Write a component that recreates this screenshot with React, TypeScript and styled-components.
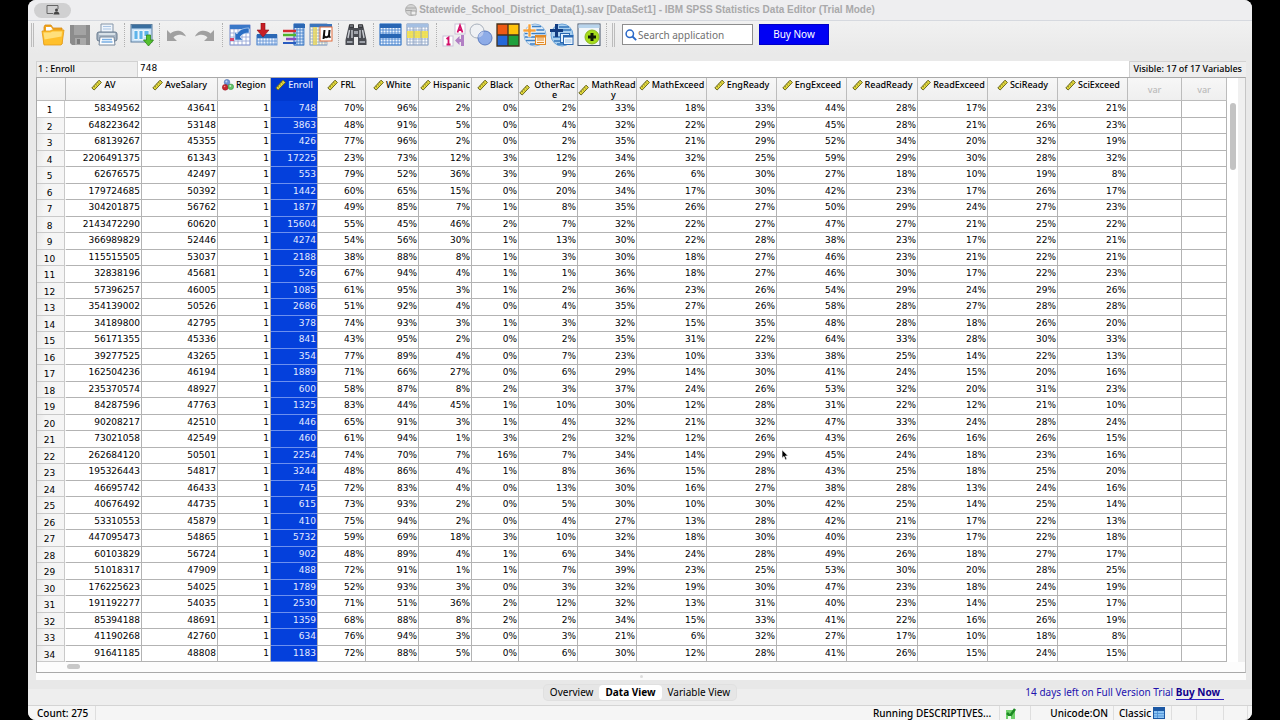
import React from "react";
import styled, { createGlobalStyle } from "styled-components";

const SANS = '"Noto Sans", "Liberation Sans", sans-serif';
const DIGITS = '"DejaVu Sans", "Noto Sans", sans-serif';

const GlobalStyle = createGlobalStyle`
  *, *::before, *::after { box-sizing: border-box; }
  body { margin: 0; background: #000; font-family: ${SANS}; color: #000; }
  button, input { font: inherit; color: inherit; }
`;

const Screen = styled.div`
  min-height: 100vh;
  padding: 0 28px;
  background: #000;
  display: flex;
`;

const AppWindow = styled.main`
  position: relative;
  flex: 1;
  min-width: 0;
  display: flex;
  flex-direction: column;
  background: #ececec;
  border-radius: 8px;
  overflow: hidden;
`;

const TitleBar = styled.header`
  height: 21px;
  display: grid;
  grid-template-columns: 1fr auto 1fr;
  align-items: center;
  padding: 0 6px;
  background: #eeeef0;
  border-bottom: 1px solid #d6d9df;
`;

const SharePill = styled.button`
  width: 37px;
  height: 15px;
  padding: 0;
  border: 0;
  border-radius: 8px;
  background: #d0d0d1;
  display: flex;
  align-items: center;
  justify-content: center;
`;

const Title = styled.h1`
  margin: 0;
  display: flex;
  align-items: center;
  gap: 2px;
  font: 700 10px/16px "Liberation Sans", Inter, sans-serif;
  color: #a9a9aa;
  white-space: nowrap;
`;

const Toolbar = styled.div`
  height: 33px;
  display: flex;
  align-items: flex-start;
  gap: 3px;
  padding: 2px 3px 0;
  background: linear-gradient(#f1f1f1, #e9e9e9);
`;

const Handle = styled.span`
  width: 3px;
  height: 24px;
  margin-right: 4px;
  border: solid #bcbcbc;
  border-width: 0 1px;
`;

const Separator = styled.span<{ $wide?: boolean }>`
  width: ${(p) => (p.$wide ? 6 : 5)}px;
  height: 24px;
  display: flex;
  justify-content: center;
  &::after { content: ""; border-left: 1px dotted #b0b0b0; }
`;

const ToolButton = styled.button`
  width: 24px;
  height: 24px;
  padding: 0;
  border: 0;
  background: transparent;
  svg { display: block; }
`;

const SearchBox = styled.label`
  width: 131px;
  height: 21px;
  margin-top: 1px;
  padding: 0 2px;
  display: flex;
  align-items: center;
  gap: 1px;
  background: #fff;
  border: 1px solid #8d8d8d;
`;

const SearchInput = styled.input`
  flex: 1;
  min-width: 0;
  padding: 0;
  border: 0;
  outline: 0;
  background: transparent;
  font-size: 10px;
  &::placeholder { color: #707070; opacity: 1; }
`;

const BuyButton = styled.button`
  width: 70px;
  height: 21px;
  margin: 1px 0 0 3px;
  padding: 0 0 2px;
  border: 1px solid #0000c4;
  background: #0000f4;
  color: #fff;
  font-size: 10px;
`;

const Body = styled.section`
  flex: 1;
  display: flex;
  flex-direction: column;
  padding: 7px 6px 0 8px;
  background: #e9e9e9;
`;

const CellBar = styled.div`
  height: 16px;
  display: flex;
  line-height: 14px;
  background: #fff;
`;

const CellName = styled.label`
  width: 102px;
  padding-left: 1px;
  background: #eee;
  border: solid #d2d2d2;
  border-width: 1px 1px 0 1px;
  font-size: 9px;
  font-weight: 500;
`;

const CellValue = styled.input`
  flex: 1;
  min-width: 0;
  height: 14px;
  padding: 0 2px;
  border: 0;
  outline: 0;
  background: #fff;
  font-family: ${DIGITS};
  font-size: 9px;
`;

const VisibleCount = styled.span`
  padding: 0 4px;
  background: #eee;
  border: solid #d2d2d2;
  border-width: 1px 0 0 1px;
  font-size: 9px;
  font-weight: 500;
  white-space: nowrap;
`;

const Frame = styled.div`
  border: 1px solid #a9a9a9;
  border-right-color: #c6c6c6;
  background: #fff;
`;

const GridArea = styled.div`
  display: flex;
`;

const TableClip = styled.div`
  flex: 1;
  min-width: 0;
  overflow: hidden;
`;

const DataTable = styled.table`
  width: 100%;
  min-width: 1190px;
  table-layout: fixed;
  border-collapse: separate;
  border-spacing: 0;
`;

const HeadCell = styled.th<{ $selected?: boolean; $empty?: boolean }>`
  height: 23px;
  padding: ${(p) => (p.$empty ? "7px 0 0" : "2px 0 0")};
  vertical-align: top;
  background: ${(p) => (p.$selected ? "#0038cf" : "linear-gradient(#f7f7f7, #efefef)")};
  color: ${(p) => (p.$selected ? "#e4eaff" : p.$empty ? "#bbb" : "#000")};
  border: solid ${(p) => (p.$selected ? "#0038cf" : "#bcbcbc")};
  border-width: 0 1px 1px 0;
  font-size: 9px;
  font-weight: 500;
  line-height: 10px;
`;

const HeadLabel = styled.span`
  display: flex;
  align-items: center;
  justify-content: center;
  gap: 2px;
  svg { flex: none; display: block; margin: -1px 0; }
`;

const HeadText = styled.span`
  min-width: 0;
  word-break: break-all;
`;

const Row = styled.tr`
  height: 16px;
  &:nth-child(odd) { height: 17px; }
`;

const RowHead = styled.th<{ $current?: boolean }>`
  padding: 2px 3px 0 0;
  background: ${(p) => (p.$current ? "#fff" : "linear-gradient(100deg, #e9e9e9, #f5f5f5 30%)")};
  box-shadow: inset -1px 0 #c9c9c9;
  border: solid #c9c9c9;
  border-width: 0 1px 1px 0;
  border-right-color: #fff;
  font: 400 9px/12px ${DIGITS};
  text-align: center;
`;

const Cell = styled.td<{ $selected?: boolean }>`
  padding: 0 1px 2px 0;
  background: ${(p) => (p.$selected ? "#0440dc" : "#fff")};
  color: ${(p) => (p.$selected ? "#e4eaff" : "#000")};
  border: solid #b3b3b3;
  border-width: 0 1px 1px 0;
  border-bottom-color: ${(p) => (p.$selected ? "#6c90ef" : "#b3b3b3")};
  font: 400 9px/12px ${DIGITS};
  text-align: right;
`;

const VerticalScroll = styled.div`
  width: 18px;
  padding: 25px 6px 0 3px;
  background: linear-gradient(90deg, #fff 0 11px, #f0f0f0 11px);
`;

const VerticalThumb = styled.div`
  width: 6px;
  height: 67px;
  border-radius: 3px;
  background: #c3c3c3;
`;

const HorizontalScroll = styled.div`
  height: 10px;
  padding: 2px 30px;
  background: #fcfcfc;
`;

const HorizontalThumb = styled.div`
  width: 13px;
  height: 5px;
  border-radius: 3px;
  background: #c8c8c8;
`;

const Splitter = styled.div`
  height: 7px;
  display: flex;
  align-items: center;
  justify-content: center;
  background: #fbfbfb;
  &::after { content: ""; width: 3px; height: 3px; border-radius: 50%; background: #dcdcdc; }
`;

const Footer = styled.div`
  height: 25px;
  display: grid;
  grid-template-columns: 1fr auto 1fr;
  align-items: center;
  padding: 0 28px;
  background: linear-gradient(#e8e8e8 0 9px, #eee 9px);
`;

const Tabs = styled.nav`
  grid-column: 2;
  display: flex;
  border-radius: 4px;
  background: #e6e6e6;
  box-shadow: 0 0 0 1px #e0e0e0;
`;

const Tab = styled.button<{ $active?: boolean }>`
  height: 15px;
  padding: 0 6px 1px;
  border: 0;
  border-radius: 4px;
  background: ${(p) => (p.$active ? "#fff" : "transparent")};
  font-size: 10px;
  line-height: 14px;
  font-weight: ${(p) => (p.$active ? 700 : 400)};
`;

const Trial = styled.p`
  margin: 0;
  justify-self: end;
  font-size: 10px;
  line-height: 14px;
  color: #2212ae;
  white-space: nowrap;
`;

const TrialLink = styled.a`
  display: inline-block;
  padding-right: 4px;
  color: #10008c;
  font-weight: 700;
  text-decoration: none;
  border-bottom: 1px solid #3020c0;
`;

const StatusBar = styled.footer`
  height: 15px;
  display: flex;
  padding: 0 4px;
  background: #f5f5f5;
  border-top: 1px solid #d4d4d4;
  font-size: 10px;
  font-weight: 500;
  line-height: 12px;
`;

const StatusItem = styled.span<{ $width: number; $end?: boolean }>`
  width: ${(p) => p.$width}px;
  padding: 0 5px 1px;
  display: flex;
  align-items: center;
  justify-content: ${(p) => (p.$end ? "flex-end" : "flex-start")};
  gap: 2px;
  border-right: 1px solid #dedede;
  white-space: nowrap;
`;

const StatusFill = styled.span`
  flex: 1;
`;

const Pointer = styled.svg`
  position: absolute;
  left: 753px;
  top: 449px;
`;

type Measure = "scale" | "nominal";
interface Column { name: string; width: number; percent: boolean; kind: Measure }

const col = (name: string, width: number, percent = true, kind: Measure = "scale"): Column => ({ name, width, percent, kind });

const columns: Column[] = [
  col("AV", 76, false),
  col("AveSalary", 76, false),
  col("Region", 53, false, "nominal"),
  col("Enroll", 47, false),
  col("FRL", 48),
  col("White", 53),
  col("Hispanic", 53),
  col("Black", 47),
  col("OtherRace", 59),
  col("MathReady", 59),
  col("MathExceed", 70),
  col("EngReady", 70),
  col("EngExceed", 70),
  col("ReadReady", 71),
  col("ReadExceed", 70),
  col("SciReady", 70),
  col("SciExceed", 70),
];

const data = `
58349562 43641 1 748 70 96 2 0 2 33 18 33 44 28 17 23 21
648223642 53148 1 3863 48 91 5 0 4 32 22 29 45 28 21 26 23
68139267 45355 1 426 77 96 2 0 2 35 21 29 52 34 20 32 19
2206491375 61343 1 17225 23 73 12 3 12 34 32 25 59 29 30 28 32
62676575 42497 1 553 79 52 36 3 9 26 6 30 27 18 10 19 8
179724685 50392 1 1442 60 65 15 0 20 34 17 30 42 23 17 26 17
304201875 56762 1 1877 49 85 7 1 8 35 26 27 50 29 24 27 23
2143472290 60620 1 15604 55 45 46 2 7 32 22 27 47 27 21 25 22
366989829 52446 1 4274 54 56 30 1 13 30 22 28 38 23 17 22 21
115515505 53037 1 2188 38 88 8 1 3 30 18 27 46 23 21 22 21
32838196 45681 1 526 67 94 4 1 1 36 18 27 46 30 17 22 23
57396257 46005 1 1085 61 95 3 1 2 36 23 26 54 29 24 29 26
354139002 50526 1 2686 51 92 4 0 4 35 27 26 58 28 27 28 28
34189800 42795 1 378 74 93 3 1 3 32 15 35 48 28 18 26 20
56171355 45336 1 841 43 95 2 0 2 35 31 22 64 33 28 30 33
39277525 43265 1 354 77 89 4 0 7 23 10 33 38 25 14 22 13
162504236 46194 1 1889 71 66 27 0 6 29 14 30 41 24 15 20 16
235370574 48927 1 600 58 87 8 2 3 37 24 26 53 32 20 31 23
84287596 47763 1 1325 83 44 45 1 10 30 12 28 31 22 12 21 10
90208217 42510 1 446 65 91 3 1 4 32 21 32 47 33 24 28 24
73021058 42549 1 460 61 94 1 3 2 32 12 26 43 26 16 26 15
262684120 50501 1 2254 74 70 7 16 7 34 14 29 45 24 18 23 16
195326443 54817 1 3244 48 86 4 1 8 36 15 28 43 25 18 25 20
46695742 46433 1 745 72 83 4 0 13 30 16 27 38 28 13 24 16
40676492 44735 1 615 73 93 2 0 5 30 10 30 42 25 14 25 14
53310553 45879 1 410 75 94 2 0 4 27 13 28 42 21 17 22 13
447095473 54865 1 5732 59 69 18 3 10 32 18 30 40 23 17 22 18
60103829 56724 1 902 48 89 4 1 6 34 24 28 49 26 18 27 17
51018317 47909 1 488 72 91 1 1 7 39 23 25 53 30 20 28 25
176225623 54025 1 1789 52 93 3 0 3 32 19 30 47 23 18 24 19
191192277 54035 1 2530 71 51 36 2 12 32 13 31 40 23 14 25 17
85394188 48691 1 1359 68 88 8 2 2 34 15 33 41 22 16 26 19
41190268 42760 1 634 76 94 3 0 3 21 6 32 27 17 10 18 8
91641185 48808 1 1183 72 88 5 0 6 30 12 28 41 26 15 24 15
`.trim().split("\n").map((line) => line.split(" "));

const Ruler = () => (
  <svg width="11" height="12" viewBox="0 0 11 12" aria-hidden="true">
    <path d="M.8 9 8 1.200 10.400 3.400 3.200 11z" fill="#e3d93c" stroke="#6b6820" strokeWidth="1" strokeLinejoin="round" />
    <path d="m2.800 7.200 1.100 1M4.600 5.200l1.100 1M6.400 3.200l1.100 1" stroke="#5c5a1a" strokeWidth=".9" />
  </svg>
);

const Nominal = () => (
  <svg width="12" height="12" viewBox="0 0 12 12" aria-hidden="true">
    <circle cx="5" cy="3.200" r="2.800" fill="#6d95d8" stroke="#4468a8" strokeWidth=".5" />
    <circle cx="3.200" cy="8.300" r="2.900" fill="#c6262f" stroke="#8e1a22" strokeWidth=".5" />
    <circle cx="8.800" cy="7.800" r="2.800" fill="#62c267" stroke="#2f8a3a" strokeWidth=".5" />
    <circle cx="4.400" cy="2.500" r="1" fill="#c4d8f8" />
    <circle cx="8.300" cy="7" r="1" fill="#c8f0c8" />
    <circle cx="2.600" cy="7.500" r=".8" fill="#ee9a9a" />
  </svg>
);

const lines = (x1: number, x2: number, y1: number, y2: number, step: number) => {
  let d = "";
  for (let x = x1; x <= x2; x += step) d += `M${x} ${y1}V${y2}`;
  for (let y = y1; y <= y2; y += step) d += `M${x1} ${y}H${x2}`;
  return d;
};

const Mesh = ({ x, y, w, h, step = 3, fill = "#fff", stroke = "#7fa6dc" }: { x: number; y: number; w: number; h: number; step?: number; fill?: string; stroke?: string }) => (
  <>
    <rect x={x} y={y} width={w} height={h} fill={fill} stroke={stroke} strokeWidth=".8" />
    <path d={lines(x, x + w, y, y + h, step)} stroke={stroke} strokeWidth=".8" fill="none" />
  </>
);

const icons: Record<string, React.ReactNode> = {
  open: (
    <>
      <path d="M3 21V4l1-2h6l2 3h9v16z" fill="#f0a51e" stroke="#d98a10" strokeWidth=".8" />
      <path d="M5 4h5l2 3h8v4H5z" fill="#fff" />
      <path d="M1 8h8l2-1h12l-2 14-1 1H3z" fill="#ffc02c" stroke="#e39a16" strokeWidth=".8" />
      <path d="M2.500 9.500h7l2-1h9.500l-.5 5-17 3z" fill="#ffe07c" />
    </>
  ),
  save: (
    <>
      <path d="M2 2h20v20H4l-2-2z" fill="#8c8c8c" />
      <rect x="6" y="2" width="12" height="10" fill="#a3a3a3" />
      <rect x="7" y="15" width="11" height="7" fill="#a9a9a9" />
      <rect x="9" y="16" width="3" height="5" fill="#7c7c7c" />
    </>
  ),
  print: (
    <>
      <path d="M6 1h12v9H6z" fill="#eef4fb" stroke="#8696a8" />
      <path d="M8 3.500h8M8 6h8" stroke="#a8c4e4" />
      <rect x="2" y="9" width="20" height="9" rx="2" fill="#a9b6c4" stroke="#66788c" />
      <path d="M4 11h16" stroke="#eaf0f5" strokeWidth="1.500" />
      <path d="M5 14h14l1 8H4z" fill="#fff" stroke="#76889c" />
      <path d="M7 16.500h10M6.500 19h11" stroke="#78aee4" strokeWidth="1.500" />
    </>
  ),
  recall: (
    <>
      <rect x="1" y="1.500" width="21" height="17.500" fill="#c9e2f7" stroke="#5d7f9f" />
      <rect x="1.500" y="2" width="20" height="3.500" fill="#3a6f9f" />
      <path d="M4 7.500h4v9H4zM9 7.500h4v9H9zM14 7.500h5v6h-5z" fill="#5eb4ea" stroke="#fff" strokeWidth=".8" />
      <path d="M16.500 12h4v5h3l-5 6-5-6h3z" fill="#55c12f" stroke="#2d8519" strokeWidth=".8" />
    </>
  ),
  undo: <path d="M2 7v11h10l-3.500-3.500c3-3.500 7.500-3.500 12.500-1C18 6.500 10 6.500 5.500 10.500z" fill="#a0a0a0" />,
  redo: <path d="M22 7v11H12l3.500-3.500c-3-3.500-7.500-3.500-12.500-1C6 6.500 14 6.500 18.500 10.500z" fill="#a0a0a0" />,
  gotoCase: (
    <>
      <Mesh x={2} y={2} w={20} h={20} step={4} stroke="#8e9ed2" />
      <path d="M2 2h20v4H2z" fill="#3a78c8" />
      <path d="M2 15h4v3H2z" fill="#d84a70" />
      <path d="M7 9v8h8l-3-3c2-3 5-4 9-4V5c-6 0-10 2-12 6z" fill="#2b6fc4" stroke="#cfe0f8" strokeWidth=".6" />
    </>
  ),
  gotoVariable: (
    <>
      <Mesh x={2} y={12} w={20} h={10} step={3} fill="#eef5ff" stroke="#5b8ed0" />
      <path d="M2 11h20v4H2z" fill="#2c68b4" />
      <path d="M6 0h4v7h4l-6 7-6-7h4z" fill="#c81e26" stroke="#8f1218" strokeWidth=".6" />
    </>
  ),
  variables: (
    <>
      <Mesh x={12} y={1} w={10} h={21} step={3} fill="#d8e8fb" stroke="#3d78c4" />
      <path d="M12 1h11v4H12z" fill="#2c68b4" />
      <path d="M1 8h13" stroke="#d42a30" strokeWidth="2.500" />
      <path d="M1 12h13" stroke="#4fb52e" strokeWidth="2.500" />
      <path d="M4 16h10" stroke="#8a4cc0" strokeWidth="2.500" />
      <path d="M1 20h13" stroke="#2a5cc0" strokeWidth="2" />
    </>
  ),
  descriptives: (
    <>
      <Mesh x={1} y={1} w={17} h={21} step={3} fill="#fffbe0" stroke="#8ba2c4" />
      <path d="M1 1h22v3H1z" fill="#3b75bd" />
      <path d="M4 4h4v18H4z" fill="#e9d75c" opacity=".8" />
      <rect x="11" y="4" width="12" height="14" fill="#fff" stroke="#e06a3a" />
      <path d="M14.500 16l1-9M15 12c0 3 4 3 5 0l.5-5M20 12c0 2 .5 2 1.500 1.500" fill="none" stroke="#111" strokeWidth="2" />
    </>
  ),
  find: (
    <>
      <path d="M5 2h5v3h4V2h5l1 4 2.500 11v5H14v-8h-4v8H1.500v-5L4 6z" fill="#4a4c52" />
      <path d="M5.500 1.500h4v3h-4zM14.500 1.500h4v3h-4z" fill="#6a6d74" stroke="#222" strokeWidth=".6" />
      <path d="M5.500 7 4 15M8 7v8M16 7v8M18.500 7l1.500 8" stroke="#c9ccd2" strokeWidth="1.400" />
      <path d="M3 19h5.500M15.500 19H21" stroke="#9da1a9" strokeWidth="2" />
      <path d="M10 8h4v3h-4z" fill="#a0a3aa" />
    </>
  ),
  insertCase: (
    <>
      <Mesh x={1} y={1} w={21} h={21} step={3} fill="#eef6ff" stroke="#3f7fcb" />
      <path d="M1 1h21v4H1zM1 11h21v4H1z" fill="#2866b4" />
    </>
  ),
  insertVariable: (
    <>
      <Mesh x={1} y={1} w={21} h={21} step={3} stroke="#8fa6c6" />
      <path d="M1 8h21v7H1z" fill="#f2e04a" opacity=".9" />
      <path d="M1 1h21v3H1z" fill="#a4bfe2" />
      <path d="M8 4v18M15 4v18" stroke="#8aa0c2" strokeWidth=".8" />
    </>
  ),
  labels: (
    <>
      <rect x="13" y="1" width="10" height="10" fill="#fff" stroke="#c9c2d8" />
      <path d="m15.500 9.500 2.500-7 2.500 7M16.500 7h3" stroke="#d40f6a" strokeWidth="1.800" fill="none" />
      <rect x="1" y="13" width="10" height="10" fill="#fff" stroke="#c9c2d8" />
      <path d="m4.500 16 2-1.500v7M4.500 21.500h4" stroke="#d40f6a" strokeWidth="1.800" fill="none" />
      <path d="M13 17.500l4.500-4.500v3H19v-4h3v11h-3v-4h-1.500v3z" fill="#b27fc4" />
    </>
  ),
  sets: (
    <>
      <circle cx="8" cy="8" r="7" fill="#eff1f4" stroke="#a8b0bc" />
      <circle cx="16" cy="15" r="7" fill="#7da0e6" fillOpacity=".85" stroke="#5c7cc0" />
      <path d="M9.200 14.800A7 7 0 0 1 14.800 8.200 7 7 0 0 1 9.200 14.800z" fill="#b9c9ee" />
    </>
  ),
  colors: (
    <>
      <path d="M1 1h11v11H1z" fill="#ee5a14" />
      <path d="M12 1h11v11H12z" fill="#ffc20a" />
      <path d="M1 12h11v11H1z" fill="#2468d8" />
      <path d="M12 12h11v11H12z" fill="#20a03c" />
      <path d="M1 1h22v22H1zM12 1v22M1 12h22" fill="none" stroke="#43321c" strokeWidth="1.300" />
    </>
  ),
  extend: (
    <>
      <circle cx="12" cy="12" r="11" fill="#dcebf8" stroke="#8db6de" />
      <path d="M3 7h18M2 10.500h20M2 14h20M3 17.500h18M9 3.500h9M7 21h10" stroke="#3c7fc4" strokeWidth="1.500" />
      <path d="M5 1h3v5h5v3H8v5H5V9H0V6h5z" fill="#f6a03a" stroke="#fff" strokeWidth=".6" />
      <rect x="12.500" y="12.500" width="10" height="9" fill="#fff3e2" stroke="#e28a28" />
      <path d="M14 15h7M14 17h7M14 19.500h7" stroke="#e28a28" />
      <path d="M12.500 12.500h10v2h-10z" fill="#e28a28" />
    </>
  ),
  custom: (
    <>
      <circle cx="12" cy="12" r="11" fill="#a9d0f0" stroke="#6ba3d8" />
      <path d="M9 4h10M10 7h11M3 14h8M4 18h7M7 21h6" stroke="#3274bb" strokeWidth="1.500" />
      <path d="M5 1h3v5h5v3H8v5H5V9H0V6h5z" fill="#123c80" />
      <rect x="10.500" y="10.500" width="9" height="9" fill="#e4f1fc" stroke="#2a68b2" />
      <rect x="13.500" y="12.500" width="9.500" height="9" fill="#f4f9fe" stroke="#2a68b2" />
      <path d="M13.500 12.500H23v2h-9.500z" fill="#2a68b2" />
      <path d="M15 17h6.500M15 19h6.500" stroke="#7fb0de" strokeWidth=".8" />
    </>
  ),
  add: (
    <>
      <rect x="1" y="1" width="22" height="21.500" fill="#f2f6fa" stroke="#43536a" />
      <path d="M1.500 1.500h21v3.500h-21z" fill="#b8d4ec" />
      <circle cx="15" cy="14" r="7" fill="#a5dc1c" stroke="#8cb822" />
      <path d="M13.500 10h3v2.500H19v3h-2.500V18h-3v-2.500H11v-3h2.500z" fill="#101a08" />
    </>
  ),
};

const toolLayout = [
  "open:Open", "save:Save", "print:Print", "|", "recall:Recall dialogs", "|", "undo:Undo", "redo:Redo", "||",
  "gotoCase:Go to case", "gotoVariable:Go to variable", "variables:Variables", "descriptives:Descriptive statistics", "|",
  "find:Find", "|", "insertCase:Insert cases", "insertVariable:Insert variable", "||",
  "labels:Value labels", "sets:Use variable sets", "colors:Colors", "extend:Extensions", "custom:Custom dialogs", "add:Add tool",
];

function Tools() {
  return (
    <>
      {toolLayout.map((item, i) => {
        if (item.startsWith("|")) return <Separator key={i} $wide={item === "||"} />;
        const [id, label] = item.split(":");
        return (
          <ToolButton key={id} type="button" aria-label={label}>
            <svg width="24" height="24" viewBox="0 0 24 24">{icons[id]}</svg>
          </ToolButton>
        );
      })}
    </>
  );
}

function Sheet() {
  return (
    <DataTable>
      <colgroup>
        <col style={{ width: 29 }} />
        {columns.map((c) => <col key={c.name} style={{ width: c.width }} />)}
        <col style={{ width: 54 }} />
        <col />
      </colgroup>
      <thead>
        <tr>
          <HeadCell aria-label="Row" />
          {columns.map((c) => (
            <HeadCell key={c.name} scope="col" $selected={c.name === "Enroll"}>
              <HeadLabel>
                {c.kind === "nominal" ? <Nominal /> : <Ruler />}
                <HeadText>{c.name}</HeadText>
              </HeadLabel>
            </HeadCell>
          ))}
          <HeadCell $empty>var</HeadCell>
          <HeadCell $empty>var</HeadCell>
        </tr>
      </thead>
      <tbody>
        {data.map((values, r) => (
          <Row key={r}>
            <RowHead scope="row" $current={r === 0}>{r + 1}</RowHead>
            {values.map((v, i) => (
              <Cell key={i} $selected={columns[i].name === "Enroll"}>
                {columns[i].percent ? `${v}%` : v}
              </Cell>
            ))}
            <Cell />
            <Cell />
          </Row>
        ))}
      </tbody>
    </DataTable>
  );
}

export default function App() {
  return (
    <Screen>
      <GlobalStyle />
      <AppWindow>
        <TitleBar>
          <SharePill type="button" aria-label="Share window">
            <svg width="14" height="10" viewBox="0 0 14 10">
              <path d="M7 8.500H1v-8h11V4" fill="none" stroke="#666" />
              <circle cx="10.500" cy="5" r="1.500" fill="#444" />
              <path d="M7.500 9.500c0-4 6-4 6 0z" fill="#444" />
            </svg>
          </SharePill>
          <Title>
            <svg width="12" height="12" viewBox="0 0 12 12" aria-hidden="true">
              <circle cx="6" cy="6" r="5.500" fill="#d4d4d4" stroke="#b4b4b4" />
              <path d="M1 4h10M1 6.500h6M6 11V7h5v4z" stroke="#a6a6a6" fill="#eee" />
            </svg>
            Statewide_School_District_Data(1).sav [DataSet1] - IBM SPSS Statistics Data Editor (Trial Mode)
          </Title>
        </TitleBar>
        <Toolbar>
          <Handle />
          <Tools />
          <Separator />
          <Handle />
          <SearchBox>
            <svg width="12" height="12" viewBox="0 0 12 12" aria-hidden="true">
              <circle cx="4.800" cy="4.800" r="3.700" fill="none" stroke="#2a68c8" strokeWidth="1.500" />
              <path d="m7.500 7.500 3.700 3.700" stroke="#2a68c8" strokeWidth="1.800" />
            </svg>
            <SearchInput type="search" aria-label="Search application" placeholder="Search application" />
          </SearchBox>
          <BuyButton type="button">Buy Now</BuyButton>
        </Toolbar>
        <Body>
          <CellBar>
            <CellName htmlFor="cell-value">1 : Enroll</CellName>
            <CellValue id="cell-value" defaultValue="748" />
            <VisibleCount>Visible: 17 of 17 Variables</VisibleCount>
          </CellBar>
          <Frame>
            <GridArea>
              <TableClip><Sheet /></TableClip>
              <VerticalScroll><VerticalThumb /></VerticalScroll>
            </GridArea>
            <HorizontalScroll><HorizontalThumb /></HorizontalScroll>
          </Frame>
          <Splitter />
        </Body>
        <Footer>
          <Tabs>
            <Tab type="button">Overview</Tab>
            <Tab type="button" $active>Data View</Tab>
            <Tab type="button">Variable View</Tab>
          </Tabs>
          <Trial>14 days left on Full Version Trial <TrialLink href="#buy">Buy Now</TrialLink></Trial>
        </Footer>
        <StatusBar>
          <StatusItem $width={64}>Count: 275</StatusItem>
          <StatusFill />
          <StatusItem $width={132}>Running DESCRIPTIVES...</StatusItem>
          <StatusItem $width={31}>
            <svg width="12" height="12" viewBox="0 0 12 12" aria-hidden="true">
              <path d="M1 3h9v9H1z" fill="#6fd06a" />
              <path d="M2 6l3 3 5-7" fill="none" stroke="#1d8a24" strokeWidth="2.500" />
              <path d="M3 9h3v3H3z" fill="#e8ffe8" />
            </svg>
          </StatusItem>
          <StatusItem $width={83} $end>Unicode:ON</StatusItem>
          <StatusItem $width={58}>
            Classic
            <svg width="12" height="12" viewBox="0 0 12 12" aria-hidden="true">
              <rect x=".5" y=".5" width="11" height="11" fill="#8cc4f4" stroke="#1c58a4" />
              <path d="M1 1h10v3H1z" fill="#1c58a4" />
              <path d="M1 6.500h10M1 9h10M4.500 4v7" stroke="#4b8ed4" strokeWidth=".8" />
            </svg>
          </StatusItem>
          <StatusItem $width={25} />
          <StatusItem $width={27} />
          <StatusItem $width={24} />
        </StatusBar>
        <Pointer width="8" height="12" viewBox="0 0 8 12" aria-hidden="true">
          <path d="M1 .8v8.400l2-1.800 1.400 3.600 1.600-.7-1.500-3.400H7.200z" fill="#000" stroke="#fff" strokeWidth=".7" />
        </Pointer>
      </AppWindow>
    </Screen>
  );
}
